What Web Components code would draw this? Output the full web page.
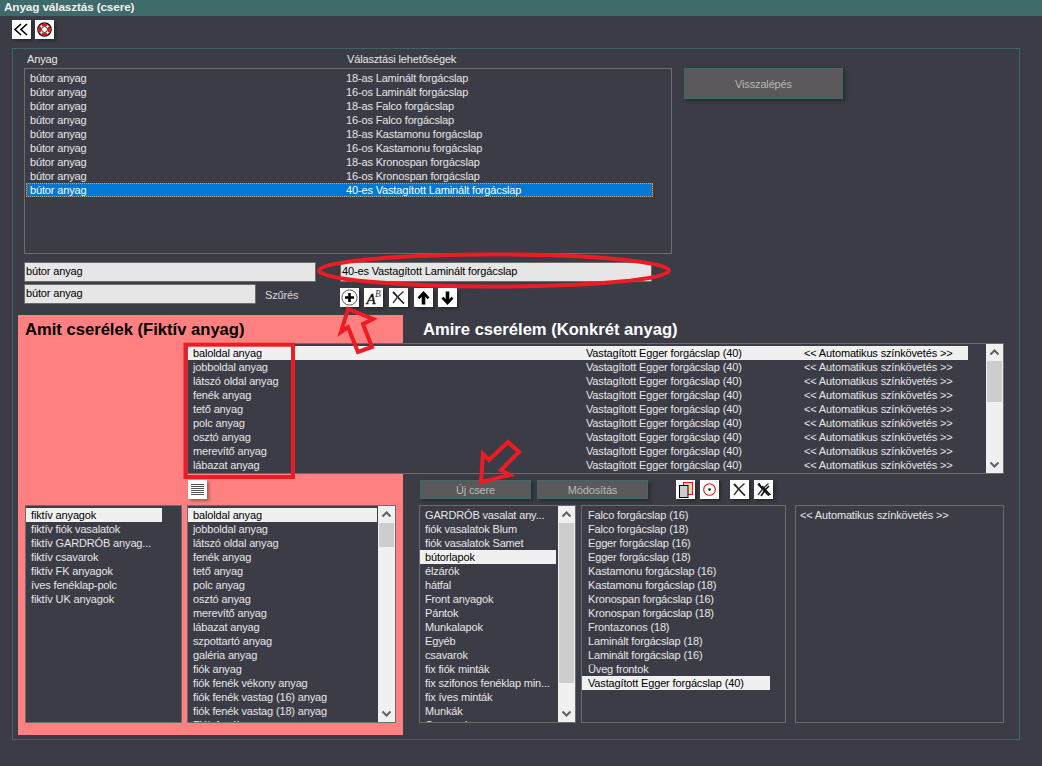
<!DOCTYPE html>
<html>
<head>
<meta charset="utf-8">
<title>Anyag választás (csere)</title>
<style>
html, body { margin: 0; height: 100%; }
body {
  background: #3c3c46;
  color: #e6e6e6;
  font: 11px "Liberation Sans", Arial, sans-serif;
  letter-spacing: -.15px;
  overflow: hidden;
  position: relative;
}
.toolbar { display: flex; gap: 4px; padding: 4px 0 0 12px; height: 25px; }
</style>
</head>
<body>

<title-bar>Anyag választás (csere)</title-bar>

<div class="toolbar">
  <icon-button icon="back"></icon-button>
  <icon-button icon="help"></icon-button>
</div>

<group-frame>
  <top-section></top-section>
  <swap-section></swap-section>
</group-frame>

<red-marks></red-marks>

<script>
const X_MARK = '<path d="M4 4C7 7 11 12 15 15.5" fill="none" stroke="#222" stroke-width="1.8"/><path d="M14.5 3.5 9 8.5 4 15" fill="none" stroke="#333" stroke-width="1.3"/>'
const ICONS = {
  back: '<path d="M9 4 3 9.5 9 15M15 4 9 9.5 15 15" fill="none" stroke="#000" stroke-width="1.6"/>',
  help: '<circle cx="9.5" cy="9.5" r="6.7" fill="#fff" stroke="#000" stroke-width="1.2"/><circle cx="9.5" cy="9.5" r="4.7" fill="none" stroke="#e8101a" stroke-width="2.6"/><path d="M5.8 5.8 7.6 7.6M13.2 5.8 11.4 7.6M5.8 13.2 7.6 11.4M13.2 13.2 11.4 11.4" stroke="#fff" stroke-width="2"/><circle cx="9.5" cy="9.5" r="3" fill="#fff" stroke="#000" stroke-width=".8"/>',
  add: '<circle cx="9.5" cy="9.5" r="7.6" fill="#fff" stroke="#555" stroke-width="1"/><path d="M9.5 5v9M5 9.5h9" stroke="#000" stroke-width="2.6"/>',
  font: '<text x="2.5" y="16" font-family="Liberation Serif" font-style="italic" font-size="15" stroke="#111" stroke-width=".4" fill="#111">A</text><text x="11" y="9" font-family="Liberation Serif" font-style="italic" font-size="9.5" fill="#333">B</text>',
  del: X_MARK,
  up: '<path d="M9.5 3 15.5 9.5 13.5 11.3 11.3 8.8V16.5H7.7V8.8L5.5 11.3 3.5 9.5Z" fill="#000"/>',
  down: '<path d="M9.5 17 15.5 10.5 13.5 8.7 11.3 11.2V3.5H7.7V11.2L5.5 8.7 3.5 10.5Z" fill="#000"/>',
  lines: '<path d="M3 4.5h13M3 6.5h13M3 8.5h13M3 10.5h13M3 12.5h13M3 14.5h13" stroke="#555" stroke-width="1"/>',
  copy: '<rect x="7.5" y="2.5" width="9" height="12" fill="#ffd0a0" stroke="#e8101a"/><rect x="3.5" y="5.5" width="8.5" height="12" fill="#ccc" stroke="#000"/>',
  target: '<circle cx="9.5" cy="9.5" r="5.8" fill="#fff" stroke="#e8101a" stroke-width="1.1"/><circle cx="9.5" cy="9.5" r="1.3" fill="#111"/>',
  delAll: X_MARK + '<path d="M8 6C10 8 13 12 16.5 15M15 6 11 10 7 16" fill="none" stroke="#111" stroke-width="1.6"/><path d="M5 3 8.5 9 6 5Z" fill="#333" stroke="#000" stroke-width=".8"/>'
}

class TitleBar extends HTMLElement {
  constructor () {
    super()
    this.attachShadow({ mode: 'open' }).innerHTML = `
      <style>
        :host { display: block; height: 16px; background: #3f6a6a; color: #f0f0f0; font-size: 11.8px; font-weight: bold; line-height: 15px; padding-left: 4px; }
      </style>
      <slot></slot>`
  }
}

class IconButton extends HTMLElement {
  constructor () {
    super()
    this.attachShadow({ mode: 'open' })
  }

  connectedCallback () {
    this.shadowRoot.innerHTML = `
      <style>
        :host { display: block; width: 19px; height: 19px; background: #fff; box-shadow: 2px 2px 3px rgba(0,0,0,.35); flex: none; }
        svg { display: block; }
      </style>
      <svg width="19" height="19" viewBox="0 0 19 19">${ICONS[this.getAttribute('icon')]}</svg>`
  }
}

class GroupFrame extends HTMLElement {
  constructor () {
    super()
    this.attachShadow({ mode: 'open' }).innerHTML = `
      <style>
        :host { display: block; box-sizing: border-box; margin: 3px 0 0 12px; width: 1008px; height: 692px; border: 1px solid #3a6666; padding: 5px 0 0 5px; }
      </style>
      <slot></slot>`
  }
}

class ListRow extends HTMLElement {
  constructor () {
    super()
    this.attachShadow({ mode: 'open' }).innerHTML = `
      <style>
        :host { display: grid; height: 14px; line-height: 14px; white-space: nowrap; overflow: hidden; flex: none; box-sizing: border-box; }
        :host([selected]) { background: var(--sel-bg, #f0f0f0); color: var(--sel-fg, #000); outline: var(--sel-outline, none); outline-offset: -1px; }
      </style>
      <slot></slot>`
  }
}

class ListBox extends HTMLElement {
  constructor () {
    super()
    this.attachShadow({ mode: 'open' }).innerHTML = `
      <style>
        :host { display: flex; box-sizing: border-box; border: 1px solid #6c6c6c; background: #3c3c46; color: #e6e6e6; overflow: hidden; min-width: 0; }
        .rows { flex: 1; min-width: 0; padding: 2px 0 0 0; overflow: hidden; display: flex; flex-direction: column; }
        .bar { display: none; width: 17px; flex: none; background: #f0f0f0; flex-direction: column; align-items: center; }
        :host([thumb]) .bar { display: flex; }
        .arrow { height: 17px; flex: none; display: block; }
        .thumb { width: 15px; background: #cdcdcd; flex: none; }
        .track { flex: 1; }
      </style>
      <div class="rows"><slot></slot></div>
      <div class="bar">
        <svg class="arrow" width="17" height="17" viewBox="0 0 17 17"><path d="M4.5 10.5 8.5 6.5l4 4" fill="none" stroke="#606060" stroke-width="2"/></svg>
        <div class="thumb"></div>
        <div class="track"></div>
        <svg class="arrow" width="17" height="17" viewBox="0 0 17 17"><path d="M4.5 6.5 8.5 10.5l4-4" fill="none" stroke="#606060" stroke-width="2"/></svg>
      </div>`
  }

  connectedCallback () {
    this.shadowRoot.querySelector('.thumb').style.height = (this.getAttribute('thumb') || 0) + 'px'
  }

  // rows: array of strings or of column arrays
  setRows (rows, selected, opts) {
    for (const [i, row] of rows.entries()) {
      const el = document.createElement('list-row')
      if (i === selected) el.setAttribute('selected', '')
      el.style.width = opts.width + 'px'
      el.style.gridTemplateColumns = opts.cols
      el.style.marginLeft = (opts.left || 0) + 'px'
      el.style.paddingLeft = opts.pad + 'px'
      for (const col of [].concat(row)) {
        const span = document.createElement('span')
        span.textContent = col
        el.appendChild(span)
      }
      this.appendChild(el)
    }
  }
}

class TextField extends HTMLElement {
  constructor () {
    super()
    this.attachShadow({ mode: 'open' }).innerHTML = `
      <style>
        :host { display: block; box-sizing: border-box; background: #e6e6e6; border: 1px solid #6c6c6c; color: #000; padding-left: 1px; line-height: 17px; height: 20px; white-space: nowrap; overflow: hidden; }
      </style>
      <slot></slot>`
  }
}

class ActionButton extends HTMLElement {
  constructor () {
    super()
    this.attachShadow({ mode: 'open' }).innerHTML = `
      <style>
        :host { display: flex; align-items: center; justify-content: center; box-sizing: border-box; background: #5a585a; border: 1px solid #3f6a6a; color: #b8b8b8; box-shadow: 2px 2px 4px rgba(0,0,0,.35); flex: none; }
      </style>
      <slot></slot>`
  }
}

const TOP_TEMPLATE = document.createElement('template')
TOP_TEMPLATE.innerHTML = `
  <style>
    :host { display: grid; grid-template-columns: 292px 24px 336px 8px 159px; grid-template-rows: 14px 186px 8px 20px 2px 20px; margin-left: 6px; height: 261px; }
    .head { display: grid; grid-template-columns: 320px 1fr; grid-column: 1 / 4; padding-left: 3px; line-height: 14px; margin-top: -2px; }
    .main { grid-column: 1 / 4; grid-row: 2; width: 648px; }
    action-button { grid-column: 5; grid-row: 2; height: 31px; align-self: start; }
    .f1 { grid-column: 1; grid-row: 4; }
    .f2 { grid-column: 3; grid-row: 4; width: 312px; }
    .filter { grid-column: 1; grid-row: 6; display: flex; gap: 9px; align-items: center; }
    .filter text-field { width: 232px; flex: none; height: 20px; }
    .filter span { padding-top: 1px; color: #d8d8d8; }
    .tools { grid-column: 3; grid-row: 6; display: flex; margin-top: 4px; height: 19px; }
    .tools icon-button { margin-right: 5px; }
    .tools icon-button:nth-child(2), .tools icon-button:nth-child(3) { margin-right: 6px; }
  </style>
  <div class="head"><span>Anyag</span><span>Választási lehetőségek</span></div>
  <list-box class="main"></list-box>
  <action-button>Visszalépés</action-button>
  <text-field class="f1">bútor anyag</text-field>
  <text-field class="f2">40-es Vastagított Laminált forgácslap</text-field>
  <div class="filter"><text-field>bútor anyag</text-field><span>Szűrés</span></div>
  <div class="tools">
    <icon-button icon="add"></icon-button>
    <icon-button icon="font"></icon-button>
    <icon-button icon="del"></icon-button>
    <icon-button icon="up"></icon-button>
    <icon-button icon="down"></icon-button>
  </div>`

class TopSection extends HTMLElement {
  constructor () {
    super()
    this.attachShadow({ mode: 'open' }).appendChild(TOP_TEMPLATE.content.cloneNode(true))
    const rows = ['18-as Laminált forgácslap', '16-os Laminált forgácslap', '18-as Falco forgácslap', '16-os Falco forgácslap', '18-as Kastamonu forgácslap', '16-os Kastamonu forgácslap', '18-as Kronospan forgácslap', '16-os Kronospan forgácslap', '40-es Vastagított Laminált forgácslap']
    const main = this.shadowRoot.querySelector('.main')
    main.style.setProperty('--sel-bg', '#0078d7')
    main.style.setProperty('--sel-fg', '#fff')
    main.style.setProperty('--sel-outline', '1px dotted #ff9a30')
    main.setRows(rows.map(r => ['bútor anyag', r]), 8, { width: 627, cols: '316px 1fr', left: 1, pad: 4 })
  }
}

const SWAP_TEMPLATE = document.createElement('template')
SWAP_TEMPLATE.innerHTML = `
  <style>
    :host { display: grid; grid-template-columns: 169px 216px 601px; grid-template-rows: 28px 131px 31px 218px 12px; width: 986px; height: 420px; }
    .pink { grid-column: 1 / 3; grid-row: 1 / -1; background: #ff8080; }
    h2 { margin: 0; font-size: 16.6px; font-weight: bold; line-height: 20px; padding-top: 5px; letter-spacing: 0; }
    .t1 { grid-column: 1 / 3; grid-row: 1; color: #000; padding-left: 7px; z-index: 1; }
    .t2 { grid-column: 3; grid-row: 1; color: #fff; padding-left: 20px; z-index: 1; }
    .big { grid-column: 2 / 4; grid-row: 2; z-index: 1; }
    .tool-l { grid-column: 2; grid-row: 3; padding: 6px 0 0 1px; z-index: 1; }
    .tool-r { grid-column: 3; grid-row: 3; display: flex; padding: 6px 0 0 17px; z-index: 1; }
    .tool-r action-button { width: 111px; height: 19px; margin-right: 6px; }
    .tool-r icon-button { margin-right: 5px; }
    .left { grid-column: 1; grid-row: 4; margin-left: 7px; width: 157px; }
    .mid { grid-column: 2; grid-row: 4; width: 209px; }
    .right { grid-column: 3; grid-row: 4; display: flex; padding-left: 16px; gap: 5px; }
    .c1 { width: 157px; flex: none; }
    .c2 { width: 205px; flex: none; }
    .c3 { width: 209px; flex: none; margin-left: 4px; }
  </style>
  <div class="pink"></div>
  <h2 class="t1">Amit cserélek (Fiktív anyag)</h2>
  <h2 class="t2">Amire cserélem (Konkrét anyag)</h2>
  <list-box class="big" thumb="41"></list-box>
  <div class="tool-l"><icon-button icon="lines"></icon-button></div>
  <div class="tool-r">
    <action-button>Új csere</action-button>
    <action-button style="margin-right:28px">Módosítás</action-button>
    <icon-button icon="copy"></icon-button>
    <icon-button icon="target" style="margin-right:11px"></icon-button>
    <icon-button icon="del"></icon-button>
    <icon-button icon="delAll"></icon-button>
  </div>
  <list-box class="left"></list-box>
  <list-box class="mid" thumb="24"></list-box>
  <div class="right">
    <list-box class="c1" thumb="160"></list-box>
    <list-box class="c2"></list-box>
    <list-box class="c3"></list-box>
  </div>`

class SwapSection extends HTMLElement {
  constructor () {
    super()
    this.attachShadow({ mode: 'open' }).appendChild(SWAP_TEMPLATE.content.cloneNode(true))
    const $ = s => this.shadowRoot.querySelector(s)
    const parts = ['baloldal anyag', 'jobboldal anyag', 'látszó oldal anyag', 'fenék anyag', 'tető anyag', 'polc anyag', 'osztó anyag', 'merevítő anyag', 'lábazat anyag']
    $('.big').setRows(parts.map(p => [p, 'Vastagított Egger forgácslap (40)', '<< Automatikus színkövetés >>']), 0,
      { width: 780, cols: '393px 218px 1fr', pad: 5 })
    $('.left').setRows(['fiktív anyagok', 'fiktív fiók vasalatok', 'fiktív GARDRÓB anyag...', 'fiktív csavarok', 'fiktív FK anyagok', 'íves fenéklap-polc', 'fiktív UK anyagok'], 0,
      { width: 136, cols: '1fr', pad: 5 })
    $('.mid').setRows(parts.concat(['szpottartó anyag', 'galéria anyag', 'fiók anyag', 'fiók fenék vékony anyag', 'fiók fenék vastag (16) anyag', 'fiók fenék vastag (18) anyag', 'Fiók fenék anyag']), 0,
      { width: 189, cols: '1fr', pad: 5 })
    $('.c1').setRows(['GARDRÓB vasalat any...', 'fiók vasalatok Blum', 'fiók vasalatok Samet', 'bútorlapok', 'élzárók', 'hátfal', 'Front anyagok', 'Pántok', 'Munkalapok', 'Egyéb', 'csavarok', 'fix fiók minták', 'fix szifonos fenéklap min...', 'fix íves minták', 'Munkák', 'Csavarok'], 3,
      { width: 136, cols: '1fr', pad: 5 })
    $('.c2').setRows(['Falco forgácslap (16)', 'Falco forgácslap (18)', 'Egger forgácslap (16)', 'Egger forgácslap (18)', 'Kastamonu forgácslap (16)', 'Kastamonu forgácslap (18)', 'Kronospan forgácslap (16)', 'Kronospan forgácslap (18)', 'Frontazonos (18)', 'Laminált forgácslap (18)', 'Laminált forgácslap (16)', 'Üveg frontok', 'Vastagított Egger forgácslap (40)'], 12,
      { width: 188, cols: '1fr', pad: 6 })
    $('.c3').setRows(['<< Automatikus színkövetés >>'], -1, { width: 200, cols: '1fr', pad: 4 })
  }
}

// the red hand drawn notes lie over the whole window
class RedMarks extends HTMLElement {
  constructor () {
    super()
    this.attachShadow({ mode: 'open' }).innerHTML = `
      <style>
        :host { position: absolute; left: 0; top: 0; width: 1042px; height: 766px; pointer-events: none; z-index: 5; }
        svg { display: block; }
      </style>
      <svg width="1042" height="766" fill="none" stroke="#ed1c24" stroke-width="4">
        <ellipse cx="494" cy="270.5" rx="175" ry="16"/>
        <path d="M348 309 341 332 348 327 358 352 372 347 363 324 373 319Z"/>
        <rect x="185.5" y="344.7" width="107.5" height="132.3"/>
        <path d="M481 482 510 475 501 470 519 452 508 442 489 460 483 454Z"/>
      </svg>`
  }
}

customElements.define('title-bar', TitleBar)
customElements.define('icon-button', IconButton)
customElements.define('group-frame', GroupFrame)
customElements.define('list-row', ListRow)
customElements.define('list-box', ListBox)
customElements.define('text-field', TextField)
customElements.define('action-button', ActionButton)
customElements.define('top-section', TopSection)
customElements.define('swap-section', SwapSection)
customElements.define('red-marks', RedMarks)
</script>
</body>
</html>
